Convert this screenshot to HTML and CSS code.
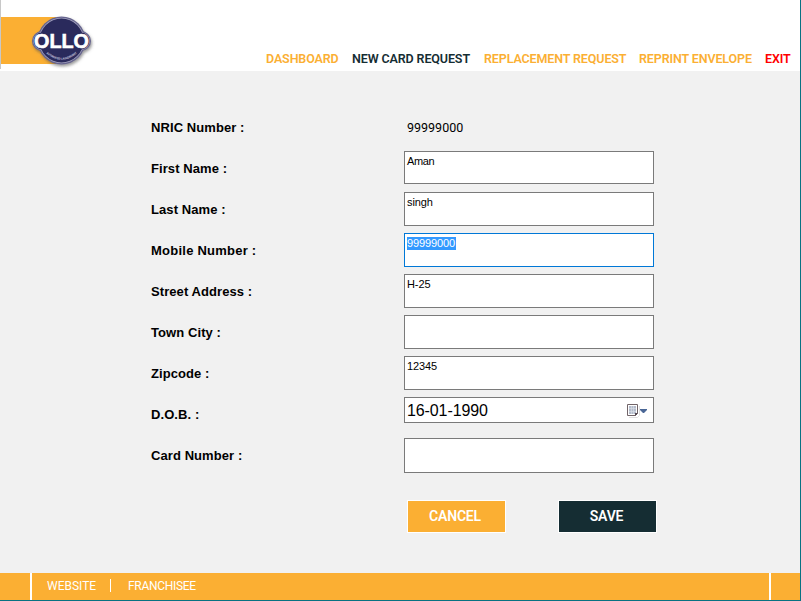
FILE: index.html
```html
<!DOCTYPE html>
<html lang="en">
<head>
<meta charset="utf-8">
<title>OLLO - New Card Request</title>
<link rel="stylesheet" href="styles.css">
</head>
<body>
<div class="window">
  <header class="header">
    <svg class="logo" width="100" height="70" viewBox="0 0 100 70" role="img" aria-label="OLLO">
      <defs>
        <filter id="shadow" x="-20%" y="-20%" width="150%" height="150%"><feDropShadow dx="1" dy="2" stdDeviation="1.500" flood-color="#555" flood-opacity=".6"/></filter>
      </defs>
      <rect x="0" y="0" width="1" height="69" fill="#c8c8c8"/>
      <rect x="1" y="17" width="55" height="47" fill="#fbaf33"/>
      <g filter="url(#shadow)">
        <g fill="#66648e"><circle cx="61.500" cy="40.500" r="24"/><circle cx="42" cy="41" r="10"/><circle cx="81" cy="41" r="10"/></g>
        <g fill="#a3a2bf"><circle cx="61.500" cy="40.500" r="22.700"/><circle cx="42" cy="41" r="8.900"/><circle cx="81" cy="41" r="8.900"/></g>
        <g fill="#2b2a5b"><circle cx="61.500" cy="40.500" r="22"/><circle cx="42" cy="41" r="8.400"/><circle cx="81" cy="41" r="8.400"/></g>
      </g>
      <path id="arc" d="M44 51.500 Q61.500 68 79 51.500" fill="none"/>
      <text class="logo-name" x="34" y="48" textLength="55" lengthAdjust="spacingAndGlyphs">OLLO</text>
      <text class="logo-tag"><textPath href="#arc" startOffset="3" textLength="34" lengthAdjust="spacingAndGlyphs">AUTOMATED LAUNDROMAT</textPath></text>
    </svg>
    <nav class="nav">
      <a class="dashboard">DASHBOARD</a>
      <a class="new-card current">NEW CARD REQUEST</a>
      <a class="replacement">REPLACEMENT REQUEST</a>
      <a class="reprint">REPRINT ENVELOPE</a>
      <a class="exit">EXIT</a>
    </nav>
  </header>
  <main class="form">
    <div class="row"><span class="label">NRIC Number :</span><span class="value">99999000</span></div>
    <div class="row"><span class="label">First Name :</span><div class="field first">Aman</div></div>
    <div class="row"><span class="label">Last Name :</span><div class="field">singh</div></div>
    <div class="row"><span class="label mobile">Mobile Number :</span><div class="field focused"><span class="selected">99999000</span></div></div>
    <div class="row"><span class="label">Street Address :</span><div class="field">H-25</div></div>
    <div class="row"><span class="label">Town City :</span><div class="field"></div></div>
    <div class="row"><span class="label">Zipcode :</span><div class="field">12345</div></div>
    <div class="row"><span class="label">D.O.B. :</span><div class="field date"><span>16-01-1990</span>
      <svg width="22" height="14" viewBox="0 0 22 14">
        <path d="M2 13.500H10.500L12.500 11.500V2" fill="none" stroke="#e3e1e1"/>
        <path d="M.5 .5H10.500V9.500L8.500 11.500H.5Z" fill="#fff" stroke="#716468"/>
        <path d="M2 2H9V9L8 10H2Z" fill="#b4bccb"/>
        <path d="M2 4.500H9M2 7.500H9M4.500 2V10M6.500 2V10" stroke="#dce1ea" stroke-width=".6"/>
        <path d="M8 12V9H11Z" fill="#51454e"/>
        <path d="M13 5H20V6L17 9H16L13 6Z" fill="#4a6796"/>
      </svg></div></div>
    <div class="row"><span class="label">Card Number :</span><div class="field card"></div></div>
    <div class="actions"><button class="cancel">CANCEL</button><button class="save">SAVE</button></div>
  </main>
  <footer class="footer">
    <div class="cap"></div>
    <div class="links"><a class="website">WEBSITE</a><span class="bar"></span><a class="franchisee">FRANCHISEE</a></div>
    <div class="cap"></div>
  </footer>
</div>
</body>
</html>
```
FILE: styles.css
```css
* { box-sizing: border-box; }
body { margin: 0; background: #f1f1f1; font-family: "Liberation Sans", Arial, sans-serif; color: #000; }
.window { width: 801px; height: 601px; display: flex; flex-direction: column; border-right: 1px solid #087283; border-bottom: 1px solid #087283; overflow: hidden; }
.header { height: 71px; flex: none; background: #fff; display: flex; }
.logo { flex: none; }
.logo-name { font: bold 20.500px "Liberation Sans", Arial, sans-serif; fill: #fff; stroke: #fff; stroke-width: .6px; }
.logo-tag { font: bold 3px "Liberation Sans", Arial, sans-serif; fill: #d5d4e3; }
.nav { display: grid; grid-template-columns: 86px 132px 155px 126px 35px; margin-left: 166px; padding-top: 51px; font: 600 12.500px/16px Roboto, Arial, sans-serif; letter-spacing: -.12px; color: #fbaf33; white-space: nowrap; }
.nav .current { color: #152d33; }
.nav .exit { color: #f00; }
.form { flex: none; height: 502px; padding: 36px 0 0 151px; }
.row { height: 41px; display: grid; grid-template-columns: 253px 250px; align-items: start; }
.label { font-size: 13px; font-weight: bold; line-height: 15px; letter-spacing: .08px; padding-top: 13px; }
.mobile { letter-spacing: .24px; }
.value { font: 12.500px/16px Roboto, Arial, sans-serif; padding: 13px 0 0 3px; }
.field { height: 34px; margin-top: 3px; border: 1px solid #7a7a7a; background: #fff; padding: 3px 2px; font-size: 11px; line-height: 13px; letter-spacing: -.1px; }
.first { height: 33px; letter-spacing: -.4px; }
.focused { border-color: #0078d7; }
.selected { display: inline-block; height: 13px; margin-top: -1px; padding-right: 1px; background: #3399ff; color: #fff; }
.date { height: 26px; padding: 0 4px 0 2px; display: flex; align-items: center; justify-content: space-between; font-size: 16px; }
.date svg { margin-top: 2px; }
.card { height: 35px; }
.actions { display: flex; gap: 52px; padding: 24px 0 0 256px; }
.actions button { width: 99px; height: 33px; padding: 0; border: 1px solid #fff; border-radius: 0; font: 600 14px/31px Roboto, Arial, sans-serif; letter-spacing: -.2px; color: #fff; }
.actions .cancel { background: #fbaf33; padding-right: 3px; }
.actions .save { background: #152d33; padding-right: 2px; }
.footer { flex: 1; display: grid; grid-template-columns: 30px 737px 1fr; gap: 2px; background: #fff; }
.cap, .links { background: #fbaf33; }
.links { display: flex; align-items: center; padding: 0 0 2px 15px; color: #fff; font: 12px/14px Roboto, Arial, sans-serif; }
.website { width: 63px; }
.bar { width: 1px; height: 13px; background: #fff; margin-right: 17px; }
.franchisee { letter-spacing: -.3px; }
```
